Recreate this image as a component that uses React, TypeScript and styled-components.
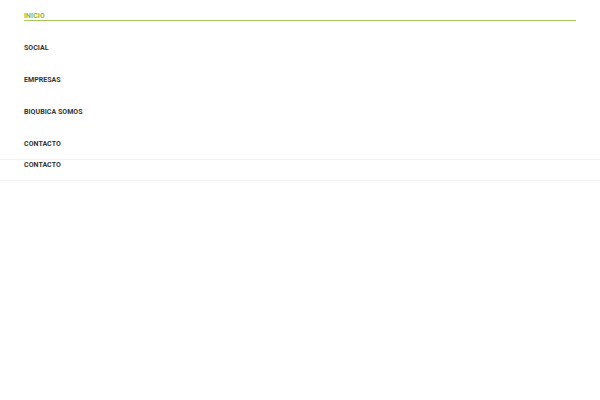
import React from "react"
import styled, { createGlobalStyle } from "styled-components"

const GlobalStyle = createGlobalStyle`
  html, body {
    margin: 0;
    padding: 0;
    background: #fff;
    font-family: Roboto, "Liberation Sans", sans-serif;
  }
`

const Menu = styled.ul`
  list-style: none;
  margin: 0;
  padding: 0 24px;
`

const Item = styled.li`
  height: 32px;
  padding-top: 12px;
  box-sizing: border-box;
`

const Link = styled.a<{ $active?: boolean }>`
  display: block;
  font-size: 7px;
  font-weight: 700;
  line-height: 8px;
  letter-spacing: 0.05px;
  text-decoration: none;
  color: ${p => (p.$active ? "#8dbb2a" : "#333")};
  border-bottom: 1px solid ${p => (p.$active ? "#a6c85a" : "transparent")};
`

const StickyBar = styled.div`
  margin-top: -1px;
  height: 22px;
  box-sizing: border-box;
  padding: 1px 24px 0;
  border-top: 1px solid #f3f3f3;
  border-bottom: 1px solid #f3f3f3;
`

const items = ["INICIO", "SOCIAL", "EMPRESAS", "BIQUBICA SOMOS", "CONTACTO"]

const App = () => (
  <>
    <GlobalStyle />
    <Menu>
      {items.map((item, i) => (
        <Item key={item}>
          <Link href="#" $active={i === 0}>
            {item}
          </Link>
        </Item>
      ))}
    </Menu>
    <StickyBar>
      <Link href="#">CONTACTO</Link>
    </StickyBar>
  </>
)

export default App
